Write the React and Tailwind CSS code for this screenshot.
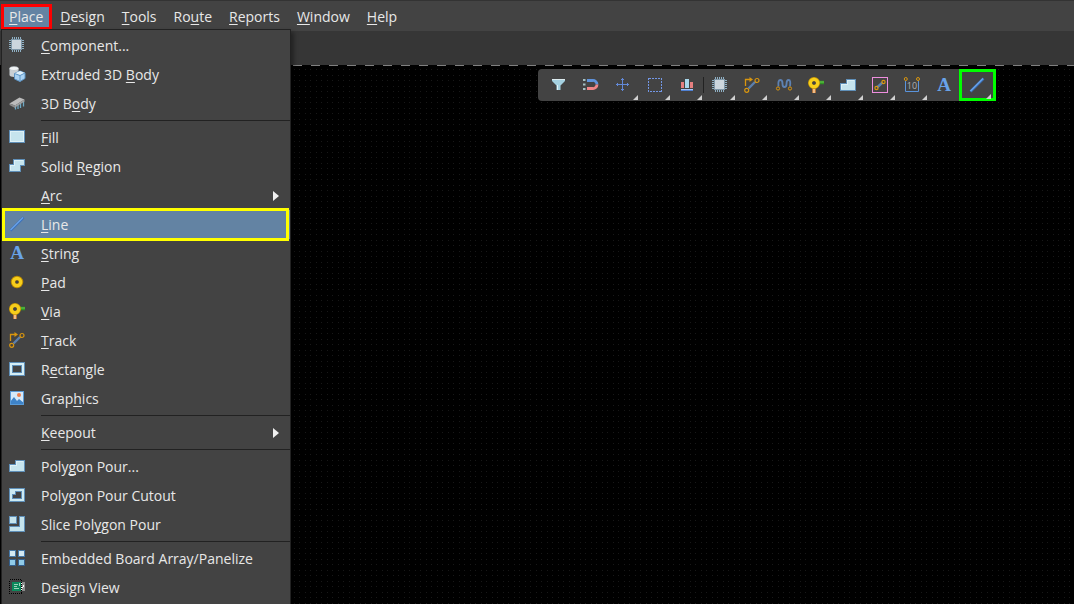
import clsx from "clsx"

const EDGE = "#5f8fb8"
const PALE = "#c6e4ed"
const GOLD = "#d9960f"
const BLUE = "#5a94dc"

function Icon({ children, crisp }) {
  return (
    <svg
      viewBox="0 0 16 16"
      className="w-4 h-4 block overflow-visible"
      fill="none"
      shapeRendering={crisp ? "crispEdges" : "auto"}
      aria-hidden="true"
    >
      {children}
    </svg>
  )
}

const ChipIcon = () => (
  <Icon crisp>
    <path
      d="M3.5 0V15M5.5 0V15M7.5 0V15M9.5 0V15M11.5 0V15M0 3.5H15M0 5.5H15M0 7.5H15M0 9.5H15M0 11.5H15"
      stroke="#8fb0c4"
    />
    <rect x="2" y="2" width="11" height="11" fill="#7f97a8" />
    <rect x="3" y="3" width="9" height="9" fill="#ccd6de" />
  </Icon>
)

const ExtrudedIcon = () => (
  <Icon>
    <path d="M0.5 2.5V9c0 1.2 2 2 4.5 2s4.5-.8 4.5-2V2.5z" fill="#c9d0d4" />
    <ellipse cx="5" cy="2.5" rx="4.5" ry="2" fill="#f1f4f5" stroke="#aab4ba" strokeWidth=".5" />
    <path d="M5.5 7.5l5.5-2.500 5 2v5.500l-5 3-5.500-2.500z" fill="#a9d2f3" stroke="#5d94c4" />
    <path d="M5.5 7.500l5.500-2.500 5 2-5 2.500z" fill="#e0f1fb" />
    <path d="M5.5 7.500l5.500 2 5-2.500M11 9.500v6" stroke="#5d94c4" />
  </Icon>
)

const BodyIcon = () => (
  <Icon>
    <path d="M6.5 10v4.500M9 9v5M11.500 8v5M14.500 6v5.500" stroke="#6fa9c4" strokeWidth="1.300" />
    <path d="M0.500 8.500L10.500 2.500 15.500 4.500 6 10.500z" fill="#bcbcbc" />
    <path d="M0.500 8.500l5.500 2v2.500l-5.500-3z" fill="#8d8d8d" />
    <path d="M6 10.500l9.500-6V6.500L6 12.500z" fill="#a0a0a0" />
  </Icon>
)

const FillIcon = () => (
  <Icon crisp>
    <rect x="0.5" y="1.5" width="15" height="12" fill={PALE} stroke={EDGE} />
    <rect x="1.5" y="2.5" width="13" height="10" stroke="#def1f6" />
  </Icon>
)

const RegionIcon = () => (
  <Icon crisp>
    <path d="M4.5 1.5H15.5V7.5H11.5V13.5H.5V6.5H4.5z" fill={PALE} stroke={EDGE} />
    <path d="M1.5 12V7.5H5.5V2.5H14" stroke="#def1f6" />
  </Icon>
)

const LineIcon = () => (
  <Icon>
    <path d="M1.5 14.5L14.5 1.5" stroke="#3c71b8" strokeWidth="2.5" />
    <path d="M1.5 14L14 1.5" stroke="#6aa3ea" strokeWidth="1.3" />
  </Icon>
)

const StringIcon = () => (
  <span
    aria-hidden="true"
    className="w-4 h-4 flex items-center justify-center font-['Liberation_Serif',serif] font-bold text-[19px] leading-4 text-[#69a3e8]"
  >
    A
  </span>
)

const PadIcon = () => (
  <Icon>
    <circle cx="8" cy="8" r="4" stroke="#b98a06" strokeWidth="4.500" />
    <circle cx="8" cy="8" r="3.700" stroke="#f7cf1c" strokeWidth="3.200" />
  </Icon>
)

const ViaIcon = () => (
  <Icon>
    <path d="M9 5.500h7" stroke="#2f9422" strokeWidth="3.500" />
    <path d="M10 5h6" stroke="#6bc94e" />
    <path d="M6 10v6" stroke="#d9853b" strokeWidth="3.500" />
    <path d="M6 10v6" stroke="#f8cf9e" strokeWidth="1.500" />
    <circle cx="6" cy="6" r="4" stroke="#c99a05" strokeWidth="4" />
    <circle cx="6" cy="6" r="3.700" stroke="#f7cf1c" strokeWidth="3.200" />
  </Icon>
)

const TrackIcon = () => (
  <Icon>
    <path d="M4.5 11.5L11 5" stroke="#5c7fac" strokeWidth="2.4" />
    <path d="M1.5 9V2.5H7" stroke={GOLD} strokeWidth="1.3" />
    <path d="M5.5 0L9 2.5 5.5 5z" fill={GOLD} />
    <circle cx="13" cy="3.5" r="2" stroke={GOLD} strokeWidth="1.2" />
    <circle cx="2.7" cy="13.3" r="2" stroke={GOLD} strokeWidth="1.2" />
  </Icon>
)

const RectangleIcon = () => (
  <Icon crisp>
    <path fillRule="evenodd" d="M.5 1.5H15.5V14.5H.5zM3.5 4.5V11.5H12.5V4.5z" fill="#d5eef5" stroke={EDGE} />
  </Icon>
)

const GraphicsIcon = () => (
  <Icon>
    <rect x="1" y="1" width="14" height="14" fill="#d6e9f8" />
    <path d="M1 12l4-5 3 4 2-2 5 4v2H1z" fill="#3e83c8" />
    <rect x="1.5" y="1.5" width="13" height="13" stroke="#5a9ad6" />
    <circle cx="10" cy="5" r="2" fill="#ed7e4c" />
  </Icon>
)

const PourIcon = () => (
  <Icon crisp>
    <path d="M6.5 2.5H15.5V13.5H.5V6.5H6.5z" fill={PALE} stroke={EDGE} />
    <path d="M1.5 12V7.5H7.5V3.5H14" stroke="#def1f6" />
  </Icon>
)

const CutoutIcon = () => (
  <Icon crisp>
    <path
      fillRule="evenodd"
      d="M.5 1.5H15.5V14.5H.5zM6.5 4.5V7.5H3.5V11.5H12.5V4.5z"
      fill="#cdeaf2"
      stroke={EDGE}
    />
  </Icon>
)

const SliceIcon = () => (
  <Icon crisp>
    <rect x="0.5" y="0.5" width="7" height="7" fill={PALE} stroke={EDGE} />
    <path d="M10.5.5H15.5V15.5H.5V10.5H10.5z" fill={PALE} stroke={EDGE} />
  </Icon>
)

const ArrayIcon = () => (
  <Icon crisp>
    <path d="M.5.5H6.5V6.5H.5zM9.5.5H15.5V6.5H9.5z" fill="#d3e9f3" stroke="#4678a8" />
    <path d="M.5 9.5H6.5V15.5H.5zM9.5 9.5H15.5V15.5H9.5z" fill="#90cbe8" stroke="#345f8c" />
  </Icon>
)

const DesignViewIcon = () => (
  <Icon crisp>
    <rect x="3" y="3" width="10" height="9" fill="#0c8a5c" />
    <rect x="12" y="3" width="4" height="9" fill="#8c8c8c" />
    <path d="M5 5.5h4M5 7.5h3M5 9.5h5M10.5 4v3" stroke="#9bd3b8" />
    <path d="M12.5 4v2M12 8.5h2M14.5 6v2M12.5 10v2" stroke="#fff" />
    <rect x="0.5" y="0.5" width="12" height="14" stroke="#000" strokeDasharray="1 1" />
  </Icon>
)

const FilterIcon = () => (
  <Icon>
    <path d="M1 2h13v2L9.5 8.5V13h-4V8.5L1 4z" fill="#a4d0e0" />
    <path d="M1 2.5h13" stroke="#dcebef" />
    <path d="M6.5 8v5" stroke="#e0f2f7" />
  </Icon>
)

const MagnetIcon = () => (
  <Icon>
    <path d="M0 3h2.5M0 7.5h2.5M0 12h2.5" stroke="#a4c0c2" strokeWidth="2" />
    <path d="M4 3.500h5.500a4 4 0 0 1 4.500 4" stroke="#5f93dc" strokeWidth="2.800" />
    <path d="M14 7.500a4 4 0 0 1-4.500 4H4" stroke="#ef8587" strokeWidth="2.800" />
  </Icon>
)

const CrossIcon = () => (
  <Icon crisp>
    <path d="M7.5 1V14M1 7.5H14M6 2.5H9M6 12.5H9M2.5 6V9M12.5 6V9" stroke="#6289d8" />
  </Icon>
)

const SelectIcon = () => (
  <Icon crisp>
    <rect x="1.5" y="1.5" width="13" height="13" stroke="#7397e6" strokeDasharray="2 1" />
  </Icon>
)

const AlignIcon = () => (
  <Icon crisp>
    <rect x="2" y="5" width="3" height="6" fill="#e68080" />
    <rect x="6" y="2" width="4" height="9" fill="#a9d8ec" />
    <rect x="11" y="5" width="3" height="6" fill="#e68080" />
    <path d="M2 12.5H14" stroke="#a5c5fa" />
    <path d="M2 13.5H14" stroke="#4f80d2" />
  </Icon>
)

const TuningIcon = () => (
  <Icon>
    <path
      d="M2.5 9.5C2 5 2.5 3 4.5 3S6.5 5 6.5 7s.5 3 2 3 2-1 2-3 0-4 2-4 2 2 1.5 6.5"
      stroke="#5d82b3"
      strokeWidth="1.8"
    />
    <circle cx="2" cy="11.5" r="1.6" stroke={GOLD} />
    <circle cx="14" cy="11.5" r="1.6" stroke={GOLD} />
  </Icon>
)

const NetIcon = () => (
  <Icon>
    <rect x="0.5" y="0.5" width="15" height="15" stroke="#ee8ede" />
    <path d="M5 10.5L10.5 5.5" stroke="#5c7fac" strokeWidth="2.4" />
    <circle cx="4.5" cy="11" r="1.6" stroke={GOLD} strokeWidth="1.2" />
    <circle cx="11.5" cy="5" r="1.6" stroke={GOLD} strokeWidth="1.2" />
  </Icon>
)

const DimensionIcon = () => (
  <Icon>
    <path d="M1.5 4V14.5H14.5V4" stroke={BLUE} />
    <circle cx="1.8" cy="2" r="1.5" stroke={GOLD} />
    <circle cx="14" cy="2" r="1.5" stroke={GOLD} />
    <text x="8" y="12" textAnchor="middle" fontSize="9" fontFamily="Open Sans, sans-serif" fill="#b0b0b0">
      10
    </text>
  </Icon>
)

// "&" marks the letter that gets the access-key underline
const menus = ["&Place", "&Design", "&Tools", "Ro&ute", "&Reports", "&Window", "&Help"]

const groups = [
  [
    { label: "&Component...", icon: ChipIcon },
    { label: "Extruded 3D &Body", icon: ExtrudedIcon },
    { label: "3D B&ody", icon: BodyIcon },
  ],
  [
    { label: "&Fill", icon: FillIcon },
    { label: "Solid &Region", icon: RegionIcon },
    { label: "&Arc", submenu: true },
    { label: "&Line", icon: LineIcon, active: true },
    { label: "&String", icon: StringIcon },
    { label: "&Pad", icon: PadIcon },
    { label: "&Via", icon: ViaIcon },
    { label: "&Track", icon: TrackIcon },
    { label: "R&ectangle", icon: RectangleIcon },
    { label: "Grap&hics", icon: GraphicsIcon },
  ],
  [{ label: "&Keepout", submenu: true }],
  [
    { label: "Poly&gon Pour...", icon: PourIcon },
    { label: "Polygon Pour Cutout", icon: CutoutIcon },
    { label: "Slice Pol&ygon Pour", icon: SliceIcon },
  ],
  [
    { label: "Embedded Board Array/Panelize", icon: ArrayIcon },
    { label: "Design View", icon: DesignViewIcon },
  ],
]

const tools = [
  { name: "Filter", icon: FilterIcon },
  { name: "Snapping", icon: MagnetIcon },
  { name: "Move", icon: CrossIcon, more: true },
  { name: "Select", icon: SelectIcon, more: true },
  { name: "Align", icon: AlignIcon, more: true },
  { name: "Component", icon: ChipIcon, more: true, divider: true },
  { name: "Route", icon: TrackIcon, more: true },
  { name: "Length tuning", icon: TuningIcon, more: true },
  { name: "Via", icon: ViaIcon, more: true },
  { name: "Polygon pour", icon: PourIcon, more: true },
  { name: "Net", icon: NetIcon, more: true },
  { name: "Dimension", icon: DimensionIcon, more: true },
  { name: "String", icon: StringIcon },
  { name: "Line", icon: LineIcon, more: true, active: true },
]

function Label({ text }) {
  const at = text.indexOf("&")
  if (at < 0) return <span>{text}</span>
  return (
    <span>
      {text.slice(0, at)}
      <span className="underline decoration-1 underline-offset-2 [text-decoration-skip-ink:none]">
        {text[at + 1]}
      </span>
      {text.slice(at + 2)}
    </span>
  )
}

function MenuItem({ label, icon: ItemIcon, submenu, active }) {
  return (
    <button
      role="menuitem"
      className={clsx(
        "relative flex w-full h-[29px] items-center gap-4 pl-[7px] pr-[11px] text-left",
        active && "bg-[#6383a3]"
      )}
    >
      <span className="w-4 h-4 mb-px shrink-0">{ItemIcon && <ItemIcon />}</span>
      <span className="grow whitespace-nowrap">
        <Label text={label} />
      </span>
      {submenu && (
        <svg viewBox="0 0 6 10" className="w-[6px] h-[10px]" aria-hidden="true">
          <path d="M0 0L6 5 0 10z" fill="#f0f0f0" />
        </svg>
      )}
      {active && <span className="absolute -inset-y-[2px] left-0 right-0 z-10 mr-px border-3 border-[#ffff00]" />}
    </button>
  )
}

function PlaceMenu() {
  return (
    <div
      role="menu"
      className="absolute left-px top-full z-10 w-[290px] bg-[#434343] border border-[#222222] pt-px pb-1 shadow-[3px_3px_4px_rgba(0,0,0,0.35)]"
    >
      {groups.map((items, i) => (
        <div key={i}>
          {i > 0 && <div role="separator" className="ml-[39px] my-[2px] h-px bg-[#222222]" />}
          {items.map((item) => (
            <MenuItem key={item.label} {...item} />
          ))}
        </div>
      ))}
    </div>
  )
}

function MenuBar() {
  return (
    <nav className="relative flex h-[29px] pl-px pt-[3px] border-t border-[#333333] bg-[#434343]">
      {menus.map((menu, i) => (
        <button
          key={menu}
          className={clsx(
            "h-[26px] flex items-center",
            i === 0
              ? "pl-2 pr-[9px] bg-[#6383a3] outline-3 -outline-offset-3 outline-[#ff0000]"
              : "px-2 mr-px"
          )}
        >
          <Label text={menu} />
        </button>
      ))}
      <PlaceMenu />
    </nav>
  )
}

function ToolButton({ name, icon: ToolIcon, more, divider, active }) {
  return (
    <button
      aria-label={name}
      className={clsx(
        "relative h-8 flex items-center",
        active && "w-[37px] pl-[7px] border-3 border-[#00ff00]",
        divider && "w-[33px] pl-[10px]",
        !active && !divider && "w-8 pl-[9px]"
      )}
    >
      {divider && <span className="absolute left-px top-2 h-4 w-px bg-[#222222]" />}
      <ToolIcon />
      {more && (
        <svg
          viewBox="0 0 5 5"
          className={clsx("absolute w-[5px] h-[5px]", active ? "right-[2px] -bottom-px" : "right-0 bottom-px")}
          aria-hidden="true"
        >
          <path d="M5 0V5H0z" fill="#d0d0d0" />
        </svg>
      )}
    </button>
  )
}

function Canvas() {
  return (
    <main className="relative grow bg-black">
      <svg className="absolute inset-0 w-full h-full" shapeRendering="crispEdges" aria-hidden="true">
        <defs>
          <pattern id="grid" width="11" height="11" patternUnits="userSpaceOnUse">
            <path d="M2 4h1v1h-1zM8 4h1v1h-1zM2 10h1v1h-1zM8 10h1v1h-1z" fill="#181818" />
          </pattern>
        </defs>
        <rect width="100%" height="100%" fill="url(#grid)" />
        <path d="M5 .5H4000" stroke="#808080" strokeDasharray="9 9" />
      </svg>
      <div
        role="toolbar"
        className="absolute left-[538px] top-1 flex h-8 pl-1 rounded-l bg-[#434343]"
      >
        {tools.map((tool) => (
          <ToolButton key={tool.name} {...tool} />
        ))}
      </div>
    </main>
  )
}

export default function App() {
  return (
    <div className="flex flex-col h-screen overflow-hidden bg-[#434343] font-['Open_Sans','Noto_Sans',sans-serif] text-[14px] leading-5 text-[#e8e8e8]">
      <MenuBar />
      <div className="h-9 border-t-2 border-[#434343] bg-[#363636]" />
      <Canvas />
    </div>
  )
}
